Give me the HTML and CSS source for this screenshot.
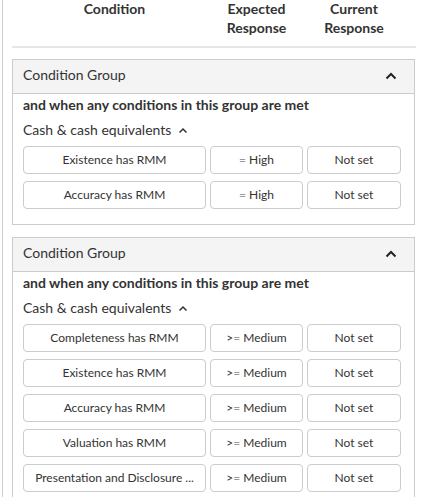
FILE: index.html
```html
<!DOCTYPE html>
<html>
<head>
<meta charset="utf-8">
<link rel="stylesheet" href="styles.css">
</head>
<body>
<div class="page">
  <div class="head-row">
    <div class="hcell">Condition</div>
    <div class="hcell">Expected<br>Response</div>
    <div class="hcell">Current<br>Response</div>
  </div>
  <div class="sep"></div>

  <div class="group">
    <div class="group-head">
      <span>Condition Group</span>
      <svg class="chev" width="12" height="8" viewBox="0 0 12 8"><path d="M1.5 6.5 L6 2 L10.5 6.5" fill="none" stroke="#222" stroke-width="2"/></svg>
    </div>
    <div class="group-body">
      <div class="when">and when any conditions in this group are met</div>
      <div class="cat">Cash &amp; cash equivalents
        <svg class="chev-s" width="10" height="7" viewBox="0 0 10 7"><path d="M1.5 5.5 L5 2 L8.5 5.5" fill="none" stroke="#333" stroke-width="1.5"/></svg>
      </div>
      <div class="rows">
        <div class="cell">Existence has RMM</div><div class="cell"><span class="op">=</span>&nbsp;High</div><div class="cell">Not set</div>
        <div class="cell">Accuracy has RMM</div><div class="cell"><span class="op">=</span>&nbsp;High</div><div class="cell">Not set</div>
      </div>
    </div>
  </div>

  <div class="group">
    <div class="group-head">
      <span>Condition Group</span>
      <svg class="chev" width="12" height="8" viewBox="0 0 12 8"><path d="M1.5 6.5 L6 2 L10.5 6.5" fill="none" stroke="#222" stroke-width="2"/></svg>
    </div>
    <div class="group-body">
      <div class="when">and when any conditions in this group are met</div>
      <div class="cat">Cash &amp; cash equivalents
        <svg class="chev-s" width="10" height="7" viewBox="0 0 10 7"><path d="M1.5 5.5 L5 2 L8.5 5.5" fill="none" stroke="#333" stroke-width="1.5"/></svg>
      </div>
      <div class="rows">
        <div class="cell">Completeness has RMM</div><div class="cell">&gt;<span class="op">=</span>&nbsp;Medium</div><div class="cell">Not set</div>
        <div class="cell">Existence has RMM</div><div class="cell">&gt;<span class="op">=</span>&nbsp;Medium</div><div class="cell">Not set</div>
        <div class="cell">Accuracy has RMM</div><div class="cell">&gt;<span class="op">=</span>&nbsp;Medium</div><div class="cell">Not set</div>
        <div class="cell">Valuation has RMM</div><div class="cell">&gt;<span class="op">=</span>&nbsp;Medium</div><div class="cell">Not set</div>
        <div class="cell">Presentation and Disclosure ...</div><div class="cell">&gt;<span class="op">=</span>&nbsp;Medium</div><div class="cell">Not set</div>
      </div>
    </div>
  </div>
</div>
</body>
</html>
```
FILE: styles.css
```css
html, body {
  margin: 0;
  padding: 0;
  background: #fff;
}
body {
  font-family: Lato, "Open Sans", sans-serif;
  color: #333;
  overflow: hidden;
}
.page {
  margin-left: 2px;
  border-left: 1px solid #cfcfcf;
  padding-left: 9px;
  width: 404px;
  min-height: 497px;
}
.head-row {
  display: grid;
  grid-template-columns: 183px 93px 94px;
  column-gap: 4px;
  padding-left: 11px;
  height: 46px;
}
.hcell {
  font-weight: bold;
  font-size: 14px;
  line-height: 19px;
  text-align: center;
  margin-top: -1px;
}
.sep {
  height: 2px;
  background: #e6e6e6;
  width: 404px;
  margin-bottom: 11px;
}
.group {
  border: 1px solid #cccccc;
  width: 401px;
  margin-bottom: 12px;
}
.group-head {
  background: #f4f4f4;
  border-bottom: 1px solid #cccccc;
  height: 34px;
  box-sizing: border-box;
  display: flex;
  align-items: center;
  justify-content: space-between;
  padding: 0 17px 5px 10px;
  font-size: 14px;
}
.chev {
  display: block;
  margin-top: 3px;
}
.group-body {
  padding: 0 10px 15px 10px;
}
.when {
  font-weight: bold;
  font-size: 14px;
  line-height: 20px;
  margin-top: 1px;
}
.cat {
  font-size: 14px;
  line-height: 20px;
  margin-top: 5px;
  display: flex;
  align-items: center;
}
.chev-s {
  display: block;
  margin-left: 7px;
}
.rows {
  display: grid;
  grid-template-columns: 183px 93px 94px;
  column-gap: 4px;
  row-gap: 7px;
  margin-top: 6px;
}
.cell {
  border: 1px solid #cccccc;
  border-radius: 4px;
  height: 26px;
  font-size: 12px;
  line-height: 26px;
  text-align: center;
  white-space: nowrap;
  overflow: hidden;
}
.op {
  color: #999;
}
```
